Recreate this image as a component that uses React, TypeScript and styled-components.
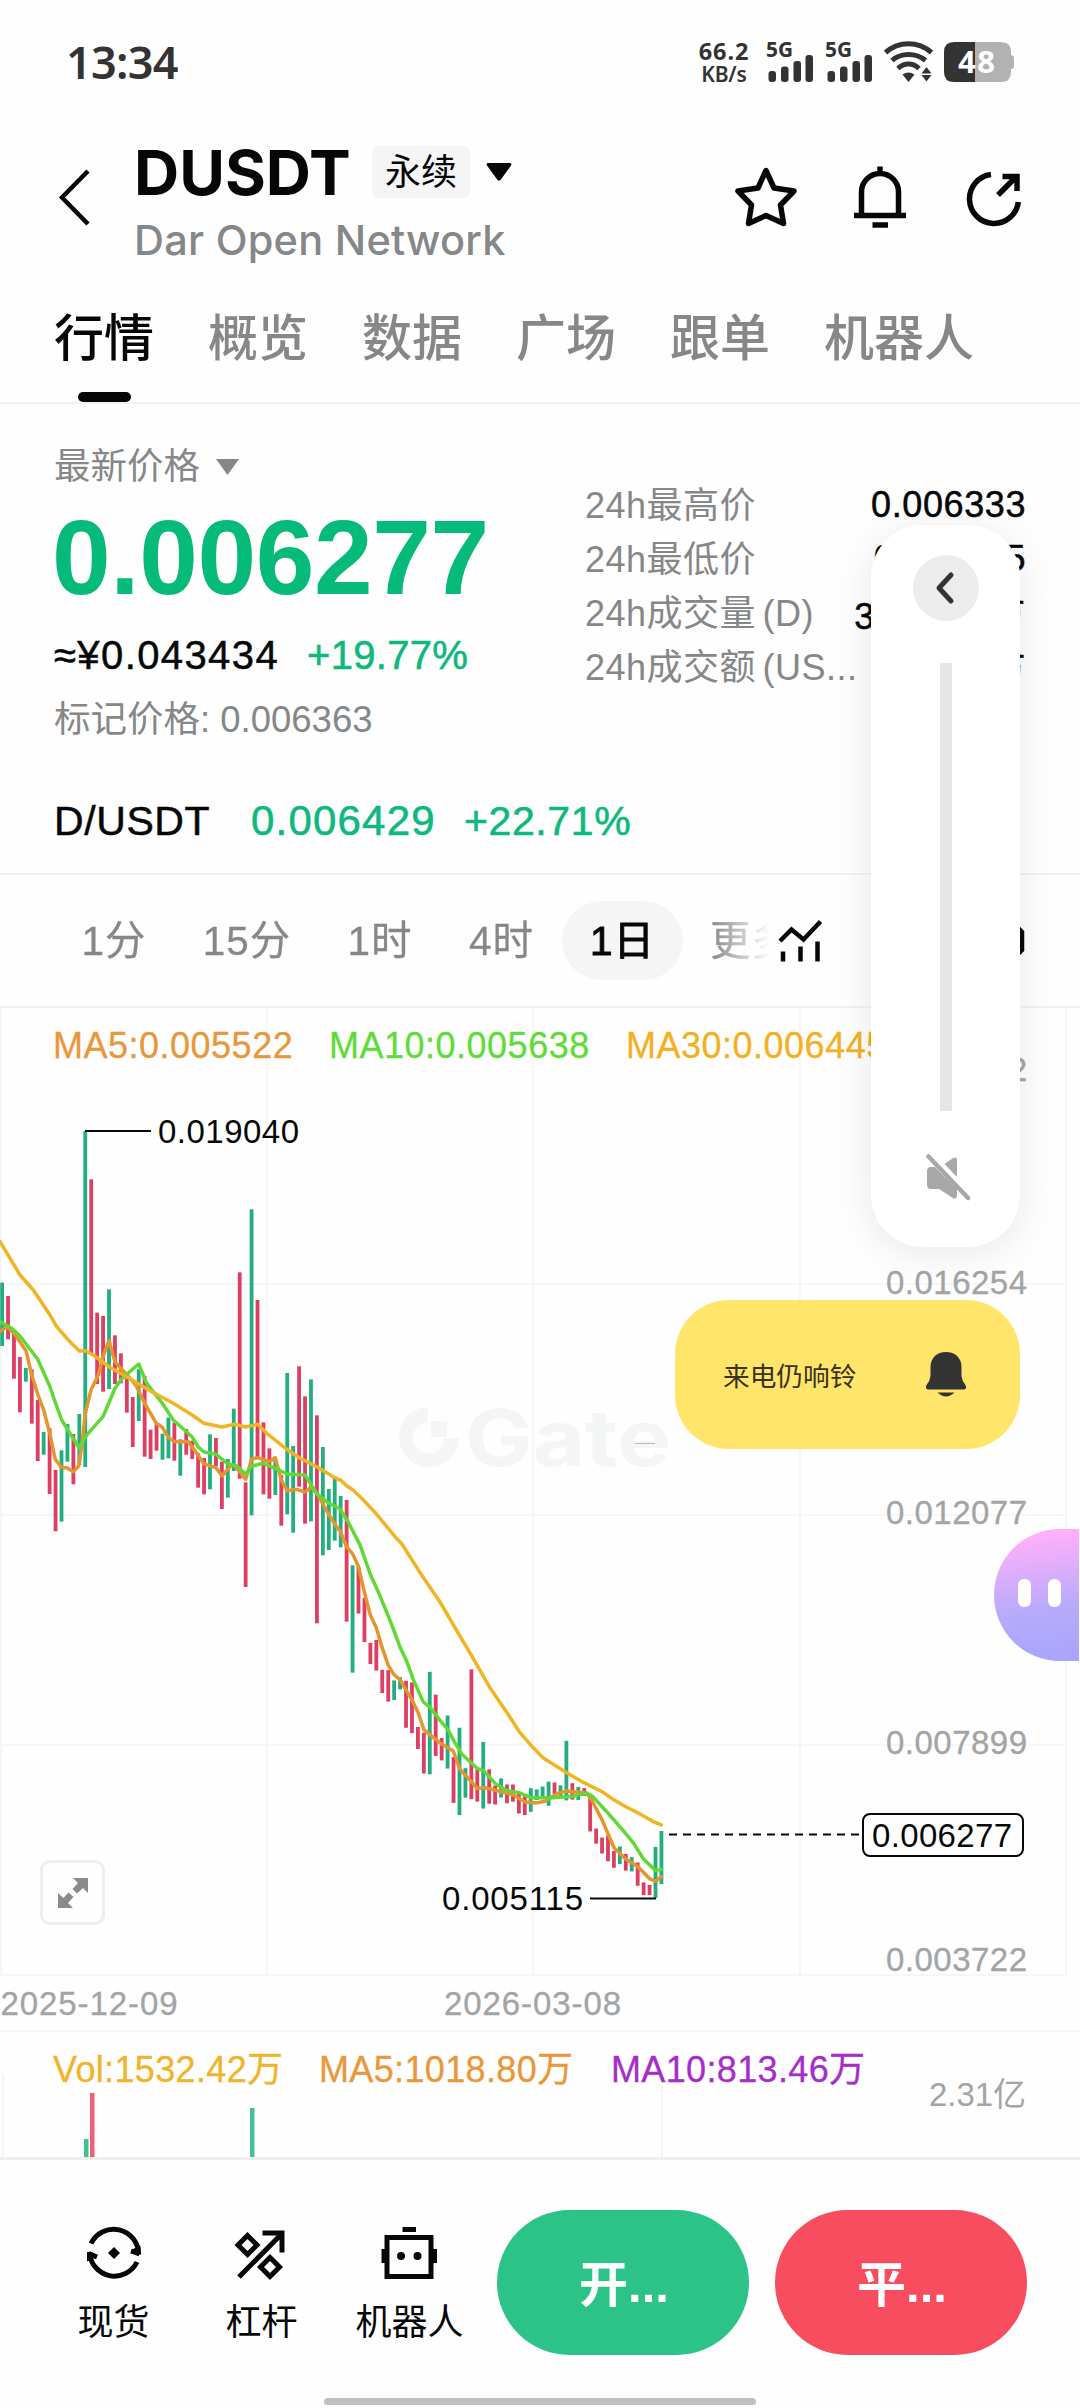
import React from 'react';
import styled, { createGlobalStyle } from 'styled-components';

const GREEN = '#0fb87f';
const GRAY = '#858789';
const AXIS = '#a2a4a5';
const latin = `"Liberation Sans", "Noto Sans CJK SC", sans-serif`;
const ui = `Inter, "Noto Sans CJK SC", sans-serif`;

const Global = createGlobalStyle`
  * { box-sizing: border-box; }
  body { margin: 0; background: #fefefe; }
`;

const Screen = styled.main`
  position: relative;
  width: 1080px;
  height: 2408px;
  overflow: hidden;
  display: flex;
  flex-direction: column;
  background: #fefefe;
  color: #060808;
  font-family: ${latin};
`;

/* ---------- status bar ---------- */
const StatusBar = styled.div`
  height: 120px;
  padding: 39px 66px 0 66px;
  display: flex;
  justify-content: space-between;
  align-items: flex-start;
  color: #333;
  font-family: "Noto Sans", sans-serif;
`;
const Clock = styled.div`
  font-size: 45px;
  font-weight: 600;
  line-height: 46px;
  letter-spacing: -0.7px;
`;
const StatusRight = styled.div`
  display: flex;
  align-items: flex-start;
  padding-top: 1px;
`;
const Speed = styled.div`
  width: 54px;
  margin-right: 15px;
  display: flex;
  flex-direction: column;
  align-items: center;
  font-weight: 700;
  font-size: 23.5px;
  line-height: 22px;
  letter-spacing: 0.9px;
  small { font-size: 21px; line-height: 24px; letter-spacing: -0.2px; font-weight: 600; }
`;
const StatusIcon = styled.svg<{ $gap?: number }>`
  flex: none;
  overflow: visible;
  margin-right: ${p => p.$gap ?? 0}px;
`;

/* ---------- header ---------- */
const Header = styled.header`
  height: 166px;
  padding: 18px 54px 0 56px;
  display: flex;
`;
const BackIcon = styled.svg`
  margin: 30px 0 0 0;
  flex: none;
`;
const TitleBlock = styled.div`
  margin-left: 42px;
  flex: 1;
`;
const TitleRow = styled.div`
  display: flex;
  align-items: center;
  height: 68px;
`;
const Title = styled.h1`
  margin: 0;
  width: 238px;
  font-family: ${ui};
  font-size: 62.5px;
  line-height: 66px;
  font-weight: 650;
  letter-spacing: 0;
`;
const Badge = styled.span`
  width: 98px;
  height: 52px;
  padding-top: 2px;
  border-radius: 6px;
  background: #f5f5f6;
  display: grid;
  place-items: center;
  font-size: 36px;
  line-height: 50px;
  margin-right: 16px;
`;
const Subtitle = styled.div`
  margin: 9px 0 0 0;
  font-family: ${ui};
  font-size: 41.5px;
  line-height: 50px;
  font-weight: 500;
  letter-spacing: 0.25px;
  color: ${GRAY};
`;
const HeaderIcons = styled.div`
  display: flex;
  gap: 50px;
  padding-top: 28px;
`;

/* ---------- tabs ---------- */
const Tabs = styled.nav`
  height: 118px;
  padding: 23px 54px 0;
  display: flex;
  gap: 54px;
  border-bottom: 2px solid #f1f2f3;
`;
const Tab = styled.div<{ $on?: boolean }>`
  font-size: 50px;
  line-height: 60px;
  font-weight: 500;
  color: ${p => (p.$on ? '#060808' : GRAY)};
  display: flex;
  flex-direction: column;
  align-items: center;
  justify-content: space-between;
  &::after {
    content: '';
    width: 53px;
    height: 10px;
    border-radius: 5px;
    background: ${p => (p.$on ? '#060808' : 'transparent')};
  }
`;

/* ---------- summary ---------- */
const Summary = styled.section`
  height: 471px;
  padding: 32px 54px 0;
  border-bottom: 2px solid #f1f2f3;
`;
const SummaryTop = styled.div`
  display: flex;
  height: 357px;
`;
const PriceCol = styled.div`
  width: 532px;
`;
const Row = styled.div<{ $h: number; $gap?: number }>`
  display: flex;
  align-items: center;
  height: ${p => p.$h}px;
  gap: ${p => p.$gap ?? 0}px;
  white-space: nowrap;
`;
const Text = styled.span<{ $size: number; $color?: string; $ls?: number; $stroke?: number; $w?: number }>`
  font-size: ${p => p.$size}px;
  color: ${p => p.$color ?? '#060808'};
  letter-spacing: ${p => p.$ls ?? 0}px;
  width: ${p => (p.$w ? `${p.$w}px` : 'auto')};
  -webkit-text-stroke: ${p => p.$stroke ?? 0}px currentColor;
  white-space: pre;
`;
const Caret = styled.svg`
  margin-top: 7px;
`;
const BigPrice = styled.div`
  margin: 9px 0 0 -2px;
  height: 122px;
  font-size: 105.5px;
  line-height: 116px;
  font-weight: 700;
  letter-spacing: -0.4px;
  color: #06ba7a;
`;
const StatCol = styled.div`
  flex: 1;
  padding-top: 42px;
`;
const Stat = styled.div`
  height: 54px;
  display: flex;
  align-items: center;
  justify-content: space-between;
  white-space: nowrap;
`;
const StatLabel = styled.span`
  font-size: 36px;
  color: ${GRAY};
  letter-spacing: 0.5px;
  word-spacing: -4px;
  margin: -6px 0 0 -1px;
`;

/* ---------- interval bar ---------- */
const Intervals = styled.section`
  height: 133px;
  display: flex;
  align-items: center;
  border-bottom: 2px solid #f1f2f3;
`;
const IntervalList = styled.div`
  width: 770px;
  padding-left: 53px;
  display: flex;
  overflow: hidden;
  mask-image: linear-gradient(to right, #000 710px, transparent 770px);
`;
const Interval = styled.div<{ $on?: boolean; $w: number }>`
  flex: none;
  width: ${p => p.$w}px;
  height: 79px;
  padding-bottom: 6px;
  border-radius: 40px;
  display: grid;
  place-items: center;
  font-size: 40.5px;
  letter-spacing: 1px;
  -webkit-text-stroke: ${p => (p.$on ? 1 : 0.3)}px currentColor;
  color: ${p => (p.$on ? '#060808' : GRAY)};
  background: ${p => (p.$on ? '#f5f5f6' : 'transparent')};
`;

/* ---------- chart ---------- */
const Chart = styled.section`
  height: 1022px;
  display: grid;
  & > * { grid-area: 1 / 1; }
`;
const VolumeChart = styled.section`
  height: 130px;
  display: grid;
  border-top: 2px solid #f4f5f6;
  border-bottom: 3px solid #efefef;
  & > * { grid-area: 1 / 1; }
`;
const Legend = styled.div<{ $top: number; $cols: string; $ls: number }>`
  padding: ${p => p.$top}px 0 0 53px;
  display: grid;
  grid-template-columns: ${p => p.$cols};
  align-content: start;
  font-size: 36px;
  line-height: 44px;
  letter-spacing: ${p => p.$ls}px;
  -webkit-text-stroke: 0.3px currentColor;
  white-space: nowrap;
`;
const Tint = styled.span<{ $c: string }>`
  color: ${p => p.$c};
`;
const ExpandButton = styled.button`
  align-self: start;
  margin: 852px 0 0 40px;
  width: 65px;
  height: 65px;
  padding: 0;
  border: 3px solid #eeeeee;
  border-radius: 10px;
  background: #fefefe;
  display: grid;
  place-items: center;
`;

/* ---------- bottom bar ---------- */
const BottomBar = styled.footer`
  height: 238px;
  padding: 50px 53px 0 59px;
  display: flex;
  align-items: flex-start;
`;
const NavItem = styled.div<{ $w: number }>`
  flex: none;
  width: ${p => p.$w}px;
  padding-top: 13px;
  display: flex;
  flex-direction: column;
  align-items: center;
  gap: 16px;
  font-size: 36px;
  line-height: 44px;
`;
const TradeButtons = styled.div`
  margin-left: auto;
  display: flex;
  gap: 26px;
`;
const TradeButton = styled.button<{ $bg: string }>`
  width: 252px;
  height: 145px;
  border: 0;
  padding: 0 0 4px 2px;
  border-radius: 73px;
  background: ${p => p.$bg};
  color: #fff;
  font-family: ${latin};
  font-size: 49px;
  font-weight: 700;
`;
const HomeBar = styled.div`
  width: 432px;
  height: 7px;
  margin: 0 auto;
  border-radius: 4px;
  background: #c0c0c0;
`;

/* ---------- floating layers ---------- */
const VolumePanel = styled.div`
  position: absolute;
  left: 871px;
  top: 525px;
  width: 149px;
  height: 722px;
  border-radius: 52px;
  background: #fff;
  box-shadow: 0 6px 40px rgba(0, 0, 0, 0.09);
  display: flex;
  flex-direction: column;
  align-items: center;
  padding-top: 30px;
`;
const RoundButton = styled.div`
  width: 66px;
  height: 66px;
  border-radius: 50%;
  background: #ececec;
  display: grid;
  place-items: center;
`;
const Track = styled.div`
  width: 12px;
  height: 448px;
  margin: 42px 0 42px 0;
  background: #e5e5e5;
`;
const MuteIcon = styled.svg`
  margin-left: 6px;
`;
const RingPill = styled.div`
  position: absolute;
  left: 675px;
  top: 1300px;
  width: 345px;
  height: 149px;
  border-radius: 54px;
  background: #ffe66a;
  color: #383323;
  font-size: 26.7px;
  display: flex;
  align-items: center;
  justify-content: space-between;
  padding: 0 52px 0 48px;
`;
const Assistant = styled.div`
  position: absolute;
  left: 994px;
  top: 1529px;
  width: 85px;
  height: 132px;
  border-radius: 66px 0 0 66px;
  background: linear-gradient(172deg, #ffb0fa 8%, #b7aafc 62%, #a7a5fb 100%);
  display: flex;
  gap: 17px;
  padding: 50px 0 0 24px;
`;
const Eye = styled.i`
  width: 13px;
  height: 28px;
  border-radius: 6px;
  background: #fff;
`;

/* ---------- candle data: direction, high y, low y ---------- */
const left = `g548-738 r588-718 r700-836 r771-937 g804-845 r808-971 r900-1083 g996-1064 r985-1182 r1110-1294
g1051-1265 g972-1085 r1002-1153 g942-1095 g93-1101 r238-760 r638-852 r648-875 g568-867 r706-852
r760-850 r835-938 r891-1041 g808-963 r828-1070 r989-1077 r970-1052 g1001-1079 g953-1075 r968-1082
g1018-1127 r987-1064 r1022-1077 r1060-1163 r1074-1183 g1003-1168 r1014-1098 r1085-1227 g1077-1193 g926-1113
r517-1136 r1147-1461 g328-1246 r600-1075 r967-1183 r1045-1196 g1080-1185 r1125-1277 g819-1243 g1038-1298
r799-1160 r889-1271 g838-1264 r946-1570 g1041-1366 g1167-1350 g1132-1322`;
const right = `g480-606 r490-788 g650-913 r655-768 r730-838 r840-892 r833-908 r906-963 r907-984 g932-980
g924-954 r933-1048 r937-1061 r1046-1100 r1060-1160 g911-1162 r967-1117 r1073-1128 g1018-1148 r1120-1232
g1048-1262 g1147-1219 r905-1223 r1150-1229 g1083-1246 r1150-1234 r1190-1236 g1172-1219 r1187-1233 r1187-1229
r1208-1258 r1215-1262 g1196-1254 g1199-1225 g1192-1222 g1180-1239 r1182-1210 g1189-1215 g1080-1226 r1184-1224
g1193-1225 r1196-1215 r1210-1302 r1295-1332 r1317-1356 r1312-1375 r1350-1391 g1339-1382 r1357-1398 g1365-1400
r1378-1435 r1427-1458 r1433-1458 g1340-1465 g1301-1431`;

const yLeft = (v: number) => 1100 + v / 3;
const yRight = (v: number) => 1300 + v / 2.45;
const parse = (src: string, y: (v: number) => number) =>
  src.split(/\s+/).map(s => {
    const [a, b] = s.slice(1).split('-').map(Number);
    return { up: s[0] === 'g', hi: y(a), lo: y(b) };
  });
const candles = [...parse(left, yLeft), ...parse(right, yRight)];

const line = (a: string, b: string) =>
  [
    ...a.split(' ').map(p => p.split(',').map(Number)).map(([x, y]) => [x / 3, yLeft(y)]),
    ...b.split(' ').map(p => p.split(',').map(Number)).map(([x, y]) => [340 + x / 3, yRight(y)]),
  ]
    .map(([x, y]) => `${x.toFixed(1)},${y.toFixed(1)}`)
    .join(' ');

const ma30 = line(
  '0,425 60,525 100,570 150,645 170,680 205,720 238,753 256,752 280,765 330,802 380,830 450,872 520,910 575,944 612,970 665,981 705,973 737,981 773,973 800,1000 862,1049 900,1075 950,1100 1000,1130 1018,1140',
  '0,440 20,455 40,466 70,490 110,525 165,580 185,597 250,680 300,740 350,810 395,872 450,950 500,1010 540,1060 580,1097 610,1122 680,1158 730,1182 787,1205 820,1224 860,1243 900,1259 945,1280 964,1286',
);
const ma10 = line(
  '0,665 35,685 60,708 113,778 150,860 165,905 185,960 237,1043 262,1003 309,950 345,865 362,840 395,810 416,792 440,850 487,910 520,960 576,1010 594,1040 612,1056 648,1063 684,1092 710,1098 737,1122 755,1098 790,1090 826,1105 862,1122 915,1125 951,1182 987,1210 1015,1224',
  '0,512 25,545 60,600 91,672 120,725 150,785 180,850 200,885 220,930 250,985 270,998 300,1030 323,1052 345,1085 365,1112 412,1148 430,1152 466,1185 500,1202 537,1207 573,1219 630,1220 697,1216 740,1208 760,1218 800,1254 850,1300 880,1330 911,1370 930,1385 947,1398 964,1395',
);
const ma5 = line(
  '0,695 20,680 42,700 78,752 95,825 113,882 131,930 149,1000 166,1078 184,1102 202,1104 220,1115 236,1098 245,1040 256,940 273,870 295,825 309,770 327,722 345,785 362,805 395,840 410,860 434,910 469,970 487,982 505,1012 523,1025 565,1025 590,1060 612,1092 648,1103 666,1128 690,1100 701,1095 719,1115 737,1138 755,1077 773,1073 808,1085 826,1073 844,1140 862,1172 890,1168 915,1176 933,1162 951,1180 987,1245 1015,1288',
  '0,565 20,605 38,622 56,655 73,715 91,772 109,803 127,853 145,895 162,918 180,930 198,955 216,980 234,1010 252,1053 269,1065 305,1088 340,1105 360,1150 394,1180 412,1197 435,1195 466,1201 519,1212 555,1230 590,1232 615,1228 655,1208 680,1203 715,1206 740,1208 755,1225 787,1275 822,1342 858,1370 893,1388 929,1418 947,1424 964,1413',
);

const axisPrices: [string, number][] = [
  ['0.020432', 1081],
  ['0.016254', 1294],
  ['0.012077', 1524],
  ['0.007899', 1754],
  ['0.003722', 1971],
];

const PriceChart = () => (
  <svg width="1080" height="1022" viewBox="0 1008 1080 1022" fontFamily={latin} fontSize="33">
    <g stroke="#f4f6f7" strokeWidth="2">
      {[1284, 1515, 1745, 1975].map(y => <path key={y} d={`M0 ${y}H1067`} />)}
      {[1, 267, 533, 800, 1066].map(x => <path key={x} d={`M${x} 1008V1975`} />)}
    </g>
    <g fill="#f3f5f6">
      <path d="M429 1407a30 30 0 1 0 31 31h-15a15.500 15.500 0 1 1-16-15.500z" transform="translate(-1)" />
      <path d="M431 1421h16v16h-16z" />
      <text x="465" y="1466" fontFamily="Inter, sans-serif" fontWeight="700" fontSize="78" textLength="206" lengthAdjust="spacingAndGlyphs">Gate</text>
    </g>
    <path d="M635 1443.500H655" stroke="#b9bbbb" strokeWidth="1" />
    {candles.map((c, i) => (
      <rect key={i} x={0.2 + i * 5.94} y={c.hi} width="3.800" height={c.lo - c.hi} fill={c.up ? '#22ae80' : '#dc3f62'} />
    ))}
    <g fill="none" strokeWidth="3.500" strokeLinejoin="round" strokeLinecap="round">
      <polyline points={ma5} stroke="#e5952f" />
      <polyline points={ma10} stroke="#60d937" />
      <polyline points={ma30} stroke="#efb524" />
    </g>
    <g stroke="#060808" strokeWidth="2">
      <path d="M85 1131H151" />
      <path d="M590 1898.500H656" />
      <path d="M669 1834.500H860" strokeDasharray="8 6" />
    </g>
    <g fill="#060808">
      <text x="158" y="1143" textLength="141">0.019040</text>
      <text x="442" y="1910" textLength="141">0.005115</text>
      <rect x="863" y="1814" width="160" height="42" rx="7" fill="#fefefe" stroke="#060808" strokeWidth="2" />
      <text x="872" y="1847" textLength="140">0.006277</text>
    </g>
    <g fill={AXIS} stroke={AXIS} strokeWidth="0.300">
      {axisPrices.map(([t, y]) => <text key={t} x="886" y={y} textLength="141">{t}</text>)}
      <text x="0.500" y="2015" textLength="177">2025-12-09</text>
      <text x="444" y="2015" textLength="177">2026-03-08</text>
    </g>
  </svg>
);

const Signal = () => (
  <StatusIcon width="59" height="42" viewBox="0 0 59 42" fill="#333">
    <text x="0" y="17" fontFamily="Noto Sans, sans-serif" fontWeight="700" fontSize="21" textLength="27" lengthAdjust="spacingAndGlyphs">5G</text>
    <rect x="2.500" y="31" width="7.500" height="11" rx="3" />
    <rect x="15" y="26.500" width="7.500" height="15.500" rx="3" />
    <rect x="27.500" y="21" width="7.500" height="21" rx="3" />
    <rect x="39.500" y="15" width="7.500" height="27" rx="3" />
  </StatusIcon>
);

export default function App() {
  return (
    <>
      <Global />
      <Screen>
        <StatusBar>
          <Clock>13:34</Clock>
          <StatusRight>
            <Speed>66.2<small>KB/s</small></Speed>
            <Signal />
            <Signal />
            <StatusIcon $gap={11} width="49" height="42" viewBox="0 0 49 42" fill="none" stroke="#333" strokeWidth="5">
              <path d="M1.500 12.500C15 .8 34 .8 47.500 12.500" />
              <path d="M8 20.500C17 12.500 32 12.500 41.500 20.500" />
              <path d="M14 28.500C20 22.500 29 22.500 35 28.500" />
              <path d="M24.500 42l-6-7.500q6-4 12 0z" fill="#333" stroke="none" />
              <path d="M42.500 27l5 6.500h-10zM42.500 41.500l5-6.500h-10z" fill="#333" stroke="none" />
            </StatusIcon>
            <StatusIcon width="70" height="42" viewBox="0 0 70 42">
              <path d="M31 2V42H10Q0 42 0 32V12Q0 2 10 2Z" fill="#333" />
              <path d="M31 2H57Q67 2 67 12V15Q70 15.500 70 18V26Q70 28.500 67 29V32Q67 42 57 42H31Z" fill="#b2b2b2" />
              <text x="14" y="33" fill="#fff" fontFamily="Noto Sans, sans-serif" fontWeight="700" fontSize="31" textLength="37">48</text>
            </StatusIcon>
          </StatusRight>
        </StatusBar>

        <Header>
          <BackIcon width="36" height="58" viewBox="0 0 36 58" fill="none" stroke="#060808" strokeWidth="4.500">
            <path d="M32 3L6 29.500L32 56" />
          </BackIcon>
          <TitleBlock>
            <TitleRow>
              <Title>DUSDT</Title>
              <Badge>永续</Badge>
              <svg width="26" height="18" viewBox="0 0 26 18"><path d="M1.500 0h23q1.500 1 .5 2.500L14.500 17q-1.500 1-3 0L1 2.500Q0 1 1.500 0z" fill="#060808" /></svg>
            </TitleRow>
            <Subtitle>Dar Open Network</Subtitle>
          </TitleBlock>
          <HeaderIcons>
            <svg width="64" height="66" viewBox="736 166 64 66" fill="none" stroke="#060808" strokeWidth="5.500" strokeLinejoin="round">
              <path d="M768 170.500L776 188L796 191L782.500 205L785.500 223.500L768 215.500L750.500 223.500L753.500 205L740 191L760 188Z" />
            </svg>
            <svg width="64" height="66" viewBox="850 166 64 66" fill="none" stroke="#060808" strokeWidth="5.500">
              <path d="M882 166.500V173M863.500 214V192A18.500 18.500 0 0 1 900.500 192V214M856 215.500H908M874.500 225H890" />
            </svg>
            <svg width="64" height="66" viewBox="964 166 64 66" fill="none" stroke="#060808" strokeWidth="5.500">
              <path d="M993 174.600A24.500 24.500 0 1 0 1020.300 202M1000 195L1018 177M1004.500 176.500H1019V191" />
            </svg>
          </HeaderIcons>
        </Header>

        <Tabs>
          <Tab $on>行情</Tab>
          <Tab>概览</Tab>
          <Tab>数据</Tab>
          <Tab>广场</Tab>
          <Tab>跟单</Tab>
          <Tab>机器人</Tab>
        </Tabs>

        <Summary>
          <SummaryTop>
            <PriceCol>
              <Row $h={54} $gap={16}>
                <Text $size={36.5} $color={GRAY}>最新价格</Text>
                <Caret width="23" height="16" viewBox="0 0 26 18"><path d="M0 0h26L13 18z" fill={GRAY} /></Caret>
              </Row>
              <BigPrice>0.006277</BigPrice>
              <Row $h={68} $gap={28}>
                <Text $size={40} $ls={1.4} $stroke={0.5}>≈¥0.043434</Text>
                <Text $size={40} $ls={0.3} $stroke={0.6} $color={GREEN}>+19.77%</Text>
              </Row>
              <Row $h={54}>
                <Text $size={36.5} $color={GRAY}>标记价格: 0.006363</Text>
              </Row>
            </PriceCol>
            <StatCol>
              <Stat><StatLabel>24h最高价</StatLabel><Text $size={36} $ls={0.6} $stroke={0.5}>0.006333</Text></Stat>
              <Stat><StatLabel>24h最低价</StatLabel><Text $size={36} $ls={0.6} $stroke={0.5}>0.005115</Text></Stat>
              <Stat><StatLabel>24h成交量 (D)</StatLabel><Text $size={36} $ls={0.7} $stroke={0.5}>3125.70万</Text></Stat>
              <Stat><StatLabel>24h成交额 (US...</StatLabel><Text $size={36} $ls={0.6} $stroke={0.5}>18.63万</Text></Stat>
            </StatCol>
          </SummaryTop>
          <Row $h={56}>
            <Text $size={41} $ls={0.6} $stroke={0.5} $w={197}>D/USDT</Text>
            <Text $size={42} $ls={1.2} $stroke={0.6} $w={213} $color={GREEN}>0.006429</Text>
            <Text $size={41} $ls={0.6} $stroke={0.6} $color={GREEN}>+22.71%</Text>
          </Row>
        </Summary>

        <Intervals>
          <IntervalList>
            <Interval $w={122}>1分</Interval>
            <Interval $w={144}>15分</Interval>
            <Interval $w={122}>1时</Interval>
            <Interval $w={121}>4时</Interval>
            <Interval $w={121} $on>1日</Interval>
            <Interval $w={137}>更多</Interval>
          </IntervalList>
          <svg width="310" height="60" viewBox="770 911 310 60" fill="none" stroke="#060808" strokeWidth="4.500">
            <path d="M780 941L791.500 929.500L803.500 939.500L820.500 921.500M783 951.500V961.500M800.500 946.500V961.500M817.500 941.500V961.500" />
            <path d="M988 928h30l4 4v18l-4 4h-30z" />
          </svg>
        </Intervals>

        <Chart>
          <PriceChart />
          <Legend $top={16} $cols="276px 297px auto" $ls={0.5}>
            <Tint $c="#e8983a">MA5:0.005522</Tint>
            <Tint $c="#5fdc38">MA10:0.005638</Tint>
            <Tint $c="#f3b01f">MA30:0.006445</Tint>
          </Legend>
          <ExpandButton>
            <svg width="32" height="32" viewBox="0 0 32 32" fill="#8a8a8a">
              <path d="M16 1H31V16L26 11L20 16.500L15.500 12L21 6ZM1 16L6.500 21L11.500 15.500L16.500 20L11 26L16 31H1Z" />
            </svg>
          </ExpandButton>
        </Chart>

        <VolumeChart>
          <svg width="1080" height="125" viewBox="0 2032 1080 125" fontFamily={latin} fontSize="33">
            <path d="M3 2075V2157M662 2085V2157" stroke="#f3f5f6" strokeWidth="2" />
            <path d="M84 2139h4.500v18h-4.500zM250 2108h4.500v49h-4.500z" fill="#42c195" />
            <path d="M90 2093h4.500v64h-4.500z" fill="#f35e77" />
            <text x="929" y="2106" fill={AXIS} textLength="97">2.31亿</text>
          </svg>
          <Legend $top={16} $cols="266px 292px auto" $ls={0.35}>
            <Tint $c="#efb42a">Vol:1532.42万</Tint>
            <Tint $c="#e8983a">MA5:1018.80万</Tint>
            <Tint $c="#a52dca">MA10:813.46万</Tint>
          </Legend>
        </VolumeChart>

        <BottomBar>
          <NavItem $w={109}>
            <svg width="62" height="62" viewBox="83 2223 62 62" fill="none" stroke="#060808" strokeWidth="5">
              <path d="M91 2243.500A25 25 0 0 1 138.600 2254.500M137 2262A25 25 0 0 1 89.500 2252" />
              <path d="M131 2250l9.500 4.500v-9zM97 2257l-10-4.500v9z" fill="#060808" stroke="none" />
              <path d="M131 2251l8.500 3M97 2257l-8.500-3.500" />
              <path d="M114 2247l6 6-6 6-6-6z" fill="#060808" stroke="none" />
            </svg>
            现货
          </NavItem>
          <NavItem $w={187}>
            <svg width="62" height="62" viewBox="231 2223 62 62" fill="none" stroke="#060808" strokeWidth="5">
              <path d="M239 2277L281.500 2234M262.500 2233H282V2252.500M247.500 2235.500L257 2245L247.500 2254.500L238 2245ZM270 2257.500L279.500 2267L270 2276.500L260.500 2267Z" />
            </svg>
            杠杆
          </NavItem>
          <NavItem $w={109}>
            <svg width="62" height="62" viewBox="380 2223 62 62" fill="none" stroke="#060808" strokeWidth="5">
              <path d="M388 2237.500H432V2276.500H388ZM403.500 2229.500H417" />
              <path d="M385 2249v14M435.500 2249v14" />
              <circle cx="402" cy="2256" r="4" fill="#060808" stroke="none" />
              <circle cx="418.500" cy="2256" r="4" fill="#060808" stroke="none" />
            </svg>
            机器人
          </NavItem>
          <TradeButtons>
            <TradeButton $bg="#2bc388">开...</TradeButton>
            <TradeButton $bg="#f84d5f">平...</TradeButton>
          </TradeButtons>
        </BottomBar>
        <HomeBar />

        <VolumePanel>
          <RoundButton>
            <svg width="24" height="34" viewBox="0 0 24 34" fill="none" stroke="#333" strokeWidth="5" strokeLinecap="round" strokeLinejoin="round">
              <path d="M17 4L5 17L17 30" />
            </svg>
          </RoundButton>
          <Track />
          <MuteIcon width="46" height="48" viewBox="0 0 46 48" fill="#a8a8a8">
            <path d="M5 14H9L31 36V43Q30 47 27 45L13 36H5Q1 36 1 32V18Q1 14 5 14Z" />
            <path d="M18.500 11L27 5Q31 3.500 31 7V24Z" />
            <path d="M2.500 3.500L42 45" stroke="#a8a8a8" strokeWidth="4.500" strokeLinecap="round" />
          </MuteIcon>
        </VolumePanel>

        <RingPill>
          来电仍响铃
          <svg width="44" height="46" viewBox="0 0 44 46" fill="#333">
            <path d="M22 0C31 0 37.500 6 37.500 14.500V24Q38 29 41.500 33Q43.500 37.500 39 37.500H5Q.500 37.500 2.500 33Q6 29 6.500 24V14.500C6.500 6 13 0 22 0Z" />
            <path d="M13.500 40.500H30.500Q22 48.500 13.500 40.500Z" />
          </svg>
        </RingPill>

        <Assistant><Eye /><Eye /></Assistant>
      </Screen>
    </>
  );
}
